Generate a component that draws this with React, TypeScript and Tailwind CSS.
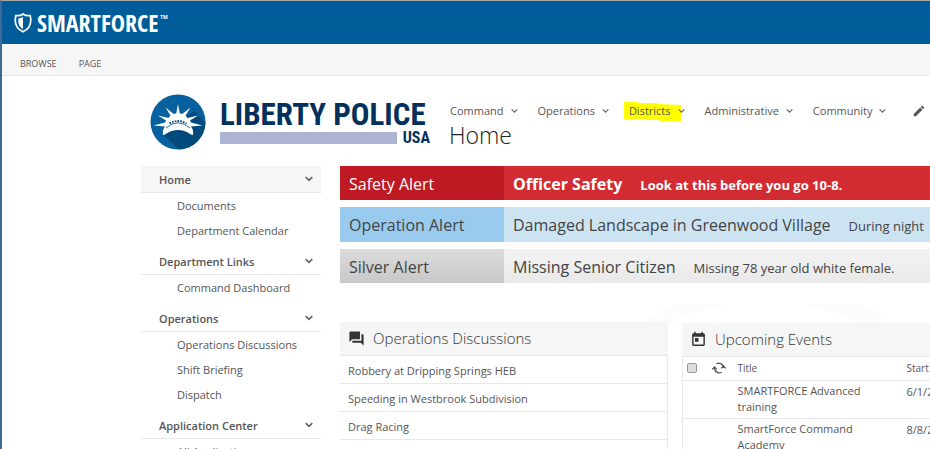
import type { ReactNode } from "react";
import { MdEdit, MdForum, MdToday } from "react-icons/md";

const navItems = ["Command", "Operations", "Districts", "Administrative", "Community"];

const sideGroups = [
  { title: "Home", links: ["Documents", "Department Calendar"], active: true },
  { title: "Department Links", links: ["Command Dashboard"], active: false },
  { title: "Operations", links: ["Operations Discussions", "Shift Briefing", "Dispatch"], active: false },
  { title: "Application Center", links: ["All Applications"], active: false },
];

const discussions = [
  "Robbery at Dripping Springs HEB",
  "Speeding in Westbrook Subdivision",
  "Drag Racing",
];

const events = [
  { title: "SMARTFORCE Advanced training", start: "6/1/2" },
  { title: "SmartForce Command Academy", start: "8/8/2" },
];

function Chevron({ bold = false }: { bold?: boolean }) {
  return (
    <svg width={bold ? 8 : 7} height="6" viewBox="0 0 8 6" fill="none" stroke="#666" strokeWidth={bold ? 1.7 : 1.3} aria-hidden="true">
      <path d="M0.7 1.2 L4 4.4 L7.3 1.2" />
    </svg>
  );
}

function ShieldLogo() {
  return (
    <svg width="18" height="20" viewBox="0 0 18 20" aria-hidden="true">
      <path
        d="M9 1 C7.2 2.4 4.8 3 1.8 2.6 C0.4 8.8 1.4 15.4 9 18.8 C16.6 15.4 17.6 8.8 16.2 2.6 C13.2 3 10.8 2.4 9 1 Z"
        fill="none"
        stroke="#fff"
        strokeWidth="1.7"
      />
      <path d="M9 4 C7.6 4.9 6.2 5.3 4.6 5.3 C3.8 9.6 4.6 13.6 9 16 Z" fill="#fff" />
    </svg>
  );
}

function LibertyBadge() {
  return (
    <svg width="56" height="56" viewBox="0 0 56 56" aria-hidden="true">
      <defs>
        <clipPath id="badge">
          <circle cx="28" cy="28" r="27.5" />
        </clipPath>
      </defs>
      <g clipPath="url(#badge)">
        <rect width="56" height="56" fill="#07619f" />
        <path d="M13 40 L29 56 L56 56 L56 29 L44 17 L28 28 Z" fill="#034a7c" />
        <path
          fill="#fff"
          d="M3.5 31.5 L15 28.5 L16 26.5 L8 21.5 L18.5 24 L20.5 21.5 L15.5 13.5 L23.8 20 L26.3 19.2 L28 10 L29.7 19.2 L32.2 20 L40.5 13.5 L35.5 21.5 L37.5 24 L48 21.5 L40 26.5 L41 28.5 L52.5 31.5 L41 32.5 C43 35 43.5 38 43 41 C39 40.5 37 36 28 36 C19 36 17 40.5 13 41 C12.5 38 13 35 15 32.5 Z"
        />
        <path d="M16 34 Q28 23.5 40 34" fill="none" stroke="#07619f" strokeWidth="0.9" />
        <path d="M19.5 29.5 Q28 24.5 36.5 29.5" fill="none" stroke="#034a7c" strokeWidth="1.8" strokeDasharray="1.7 1.1" />
      </g>
    </svg>
  );
}

function RefreshIcon() {
  return (
    <svg width="14" height="12" viewBox="0 0 14 12" fill="none" stroke="#555" strokeWidth="1.3" aria-hidden="true">
      <path d="M4.4 1.8 A4.8 4.8 0 0 1 11.5 5 V6" />
      <path d="M9.2 6.4 L11.5 4 L13.7 6.4" />
      <path d="M9.6 10.2 A4.8 4.8 0 0 1 2.5 7 V6" />
      <path d="M0.3 7.4 L2.5 5 L4.8 7.4" />
    </svg>
  );
}

function Alert({ label, title, text, row, left, right }: { label: string; title: string; text: string; row: string; left: string; right: string }) {
  return (
    <a href="#" className={`flex whitespace-nowrap text-base ${row}`}>
      <span className={`w-[164px] shrink-0 pl-[9px] leading-[36px] ${left}`}>{label}</span>
      <span className={`flex flex-1 items-baseline gap-[18px] overflow-hidden pl-[9px] leading-[36px] ${right}`}>
        <span>{title}</span>
        <span className="text-[13px]">{text}</span>
      </span>
    </a>
  );
}

function PanelTitle({ icon, children }: { icon: ReactNode; children: ReactNode }) {
  return (
    <h2 className="flex h-[34px] items-center gap-2 border-b border-[#e8e8e8] bg-[#f6f6f6] pl-2 text-[15px] font-light text-[#333]">
      {icon}
      {children}
    </h2>
  );
}

export default function App() {
  return (
    <div className="flex h-screen flex-col overflow-hidden border-t border-l-2 border-t-[#a8a8a8] border-l-[#3b6a96] bg-white font-['Open_Sans','Noto_Sans',sans-serif] text-[11px] text-[#555]">
      <header className="flex h-[43px] shrink-0 items-center gap-[5px] bg-[#005c99] pl-3 text-white">
        <ShieldLogo />
        <span className="flex items-start gap-[2px] font-['Open_Sans_Condensed','Liberation_Sans_Narrow',sans-serif] text-2xl leading-6 font-bold">
          SMARTFORCE<span className="pt-[2px] text-[6px] leading-[8px]">TM</span>
        </span>
      </header>
      <div className="flex h-8 shrink-0 items-center gap-[22px] border-b border-[#e8e8e8] bg-[#f6f6f6] pt-2 pl-[18px] text-[9px]">
        <button type="button">BROWSE</button>
        <button type="button">PAGE</button>
      </div>

      <div className="flex h-[90px] shrink-0 items-start pt-[18px] pl-[148px]">
        <a href="#" className="flex w-[299px] shrink-0 gap-[14px]">
          <LibertyBadge />
          <span className="flex w-[210px] flex-col font-['Roboto_Condensed','Liberation_Sans_Narrow',sans-serif] font-bold text-[#04305c]">
            <span className="pt-[6px] text-[31px] leading-[30px] whitespace-nowrap">LIBERTY POLICE</span>
            <span className="flex items-center gap-[6px] text-base leading-4">
              <span className="h-3 flex-1 bg-[#adb3d3]" />
              USA
            </span>
          </span>
        </a>
        <div className="flex flex-1 flex-col pt-[7px]">
          <div className="flex items-center pl-px">
            <nav className="flex gap-5">
              {navItems.map((item) => (
                <a key={item} href="#" className="relative flex h-5 shrink-0 items-center gap-[7px]">
                  {item === "Districts" && (
                    <svg className="absolute top-0 -left-[5px]" width="58" height="21" viewBox="0 0 58 21" aria-hidden="true">
                      <path d="M0 1 L14 1 L15 2 L33 2 L34 3 L57 4 V20 H36 L35 19 H23 L22 18 H0 Z" fill="#ffff00" />
                    </svg>
                  )}
                  <span className="relative">{item}</span>
                  <span className="relative">
                    <Chevron />
                  </span>
                </a>
              ))}
            </nav>
            <button type="button" aria-label="Edit links" className="ml-[26px] shrink-0">
              <MdEdit size={14} />
            </button>
          </div>
          <h1 className="text-[23px] leading-[28px] font-light text-[#222]">Home</h1>
        </div>
      </div>

      <div className="flex min-h-0 flex-1 gap-[19px] pl-[139px]">
        <aside className="flex w-[180px] shrink-0 flex-col gap-[5px]">
          {sideGroups.map((group) => (
            <section key={group.title} className="shrink-0">
              <h3 className={`flex h-[27px] items-center justify-between border-b border-[#e8e8e8] pr-2 pl-[18px] font-semibold ${group.active ? "bg-[#f6f6f6]" : ""}`}>
                <span className="pt-[3px]">{group.title}</span>
                <Chevron bold />
              </h3>
              <ul>
                {group.links.map((link) => (
                  <li key={link} className="h-[25px] pl-9 leading-[25px]">
                    <a href="#">{link}</a>
                  </li>
                ))}
              </ul>
            </section>
          ))}
        </aside>

        <main className="relative flex min-w-0 flex-1 flex-col">
          <svg className="absolute top-[138px] left-[300px]" width="250" height="24" viewBox="0 0 250 24" aria-hidden="true">
            <path d="M4 20 Q20 4 34 0 H90 Q54 6 30 20 Z M162 0 H222 Q238 6 248 20 H214 Q196 6 162 0 Z" fill="#fcfcfc" />
          </svg>
          <div className="flex flex-col gap-[7px]">
            <Alert label="Safety Alert" title="Officer Safety" text="Look at this before you go 10-8." row="h-[34px] text-white" left="bg-[#be1a24]" right="bg-[#d22b32] font-bold" />
            <Alert label="Operation Alert" title="Damaged Landscape in Greenwood Village" text="During night" row="h-[35px] text-[#444]" left="bg-[#99cbef]" right="bg-[#cce3f2]" />
            <Alert label="Silver Alert" title="Missing Senior Citizen" text="Missing 78 year old white female." row="h-[34px] text-[#444]" left="bg-linear-to-b from-[#dcdcdc] to-[#c8c8c8]" right="bg-linear-to-b from-[#f3f3f3] to-[#e9e9e9]" />
          </div>
          <div className="relative flex gap-[14px] pt-[39px]">
            <section className="w-[328px] shrink-0">
              <PanelTitle icon={<MdForum size={17} />}>Operations Discussions</PanelTitle>
              <ul className="h-[100px] border-r border-[#e8e8e8]">
                {discussions.map((item) => (
                  <li key={item} className="h-7 border-b border-[#e8e8e8] pl-2 leading-[29px]">
                    <a href="#">{item}</a>
                  </li>
                ))}
              </ul>
            </section>
            <section className="min-w-0 flex-1 overflow-hidden pt-px">
              <PanelTitle icon={<MdToday size={17} />}>Upcoming Events</PanelTitle>
              <table className="w-[276px] table-fixed border-l border-[#e8e8e8] text-left">
                <thead>
                  <tr className="h-[23px] border-b border-[#e8e8e8] text-[10px]">
                    <th className="w-[26px] pl-1">
                      <input type="checkbox" aria-label="Select all events" className="block size-[10px] appearance-none rounded-[2px] border border-[#999] bg-[#ddd]" />
                    </th>
                    <th className="w-[29px] pl-[3px]">
                      <button type="button" aria-label="Refresh" className="block">
                        <RefreshIcon />
                      </button>
                    </th>
                    <th className="w-[169px] font-normal">Title</th>
                    <th className="font-normal">Start</th>
                  </tr>
                </thead>
                <tbody>
                  {events.map((event) => (
                    <tr key={event.title} className="border-b border-[#e8e8e8] align-top leading-4">
                      <td />
                      <td />
                      <td className="pt-[2px] pr-8 pb-[3px]">
                        <a href="#">{event.title}</a>
                      </td>
                      <td className="pt-[3px]">{event.start}</td>
                    </tr>
                  ))}
                </tbody>
              </table>
            </section>
          </div>
        </main>
      </div>
    </div>
  );
}
